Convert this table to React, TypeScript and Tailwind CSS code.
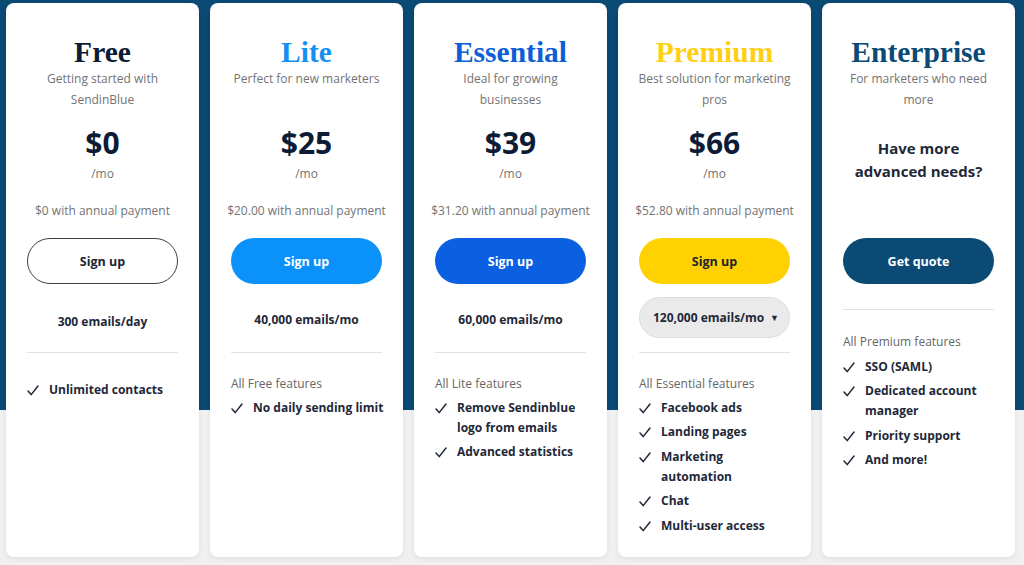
import React from 'react';

type Plan = {
  name: string;
  nameColor: string;
  subtitle: string[];
  price?: string;
  annual?: string;
  button: string;
  buttonClass: string;
  emails?: string;
  dropdown?: boolean;
  heading?: string;
  features: string[][];
};

const PLANS: Plan[] = [
  {
    name: 'Free',
    nameColor: 'text-[#0c1c36]',
    subtitle: ['Getting started with', 'SendinBlue'],
    price: '$0',
    annual: '$0 with annual payment',
    button: 'Sign up',
    buttonClass: 'bg-white border border-[#3a3f48] text-[#1c2433]',
    emails: '300 emails/day',
    features: [['Unlimited contacts']],
  },
  {
    name: 'Lite',
    nameColor: 'text-[#1590f2]',
    subtitle: ['Perfect for new marketers'],
    price: '$25',
    annual: '$20.00 with annual payment',
    button: 'Sign up',
    buttonClass: 'bg-[#0b92fa] text-white',
    emails: '40,000 emails/mo',
    heading: 'All Free features',
    features: [['No daily sending limit']],
  },
  {
    name: 'Essential',
    nameColor: 'text-[#0c5fd6]',
    subtitle: ['Ideal for growing', 'businesses'],
    price: '$39',
    annual: '$31.20 with annual payment',
    button: 'Sign up',
    buttonClass: 'bg-[#0a60e0] text-white',
    emails: '60,000 emails/mo',
    heading: 'All Lite features',
    features: [['Remove Sendinblue', 'logo from emails'], ['Advanced statistics']],
  },
  {
    name: 'Premium',
    nameColor: 'text-[#ffcf14]',
    subtitle: ['Best solution for marketing', 'pros'],
    price: '$66',
    annual: '$52.80 with annual payment',
    button: 'Sign up',
    buttonClass: 'bg-[#ffd100] text-[#1c2433]',
    emails: '120,000 emails/mo',
    dropdown: true,
    heading: 'All Essential features',
    features: [
      ['Facebook ads'],
      ['Landing pages'],
      ['Marketing', 'automation'],
      ['Chat'],
      ['Multi-user access'],
    ],
  },
];

const ENTERPRISE_FEATURES = [['SSO (SAML)'], ['Dedicated account', 'manager'], ['Priority support'], ['And more!']];

function Check() {
  return (
    <svg width="12" height="11" viewBox="0 0 12 11" className="shrink-0 mt-[5px]">
      <path d="M1 6 L4.2 9.6 L11 1" fill="none" stroke="#1e2838" strokeWidth="1.5" strokeLinecap="round" strokeLinejoin="round" />
    </svg>
  );
}

function FeatureList({ items }: { items: string[][] }) {
  return (
    <ul className="flex flex-col gap-[4.5px]">
      {items.map((lines) => (
        <li key={lines[0]} className="flex gap-[10px]">
          <Check />
          <span className="text-[12px] leading-[20px] font-bold text-[#1e2838] whitespace-nowrap">
            {lines.map((l, i) => (
              <span key={i} className="block">{l}</span>
            ))}
          </span>
        </li>
      ))}
    </ul>
  );
}

function Header({ name, nameColor, subtitle }: { name: string; nameColor: string; subtitle: string[] }) {
  return (
    <>
      <h2 className={`text-[29.5px] leading-[30px] font-bold text-center ${nameColor}`} style={{ fontFamily: '"Liberation Serif", serif' }}>
        {name}
      </h2>
      <div className="h-[42px] mt-[0.5px] flex flex-col items-center text-[12px] leading-[21px] text-[#737373]">
        {subtitle.map((s) => (
          <span key={s} className="whitespace-nowrap">{s}</span>
        ))}
      </div>
    </>
  );
}

function PlanCard({ plan }: { plan: Plan }) {
  return (
    <div className="w-[193px] h-[554px] shrink-0 bg-white rounded-[8px] shadow-[0_2px_6px_rgba(0,0,0,0.08)] px-[21px] pt-[34px] flex flex-col items-stretch">
      <Header name={plan.name} nameColor={plan.nameColor} subtitle={plan.subtitle} />
      <div className="mt-[15px] text-[30px] leading-[36px] font-bold text-[#0c1c36] text-center">{plan.price}</div>
      <div className="mt-[3px] text-[12px] leading-[20px] text-[#737373] text-center">/mo</div>
      <div className="mt-[17px] flex justify-center text-[12px] leading-[20px] text-[#737373]">
        <span className="whitespace-nowrap">{plan.annual}</span>
      </div>
      <button className={`mt-[17px] h-[46px] pt-[3px] rounded-full text-[12.5px] font-bold ${plan.buttonClass}`}>{plan.button}</button>
      <div className="h-[68px] flex items-center justify-center">
        {plan.dropdown ? (
          <div className="w-full h-[41px] rounded-full bg-[#ebeaea] border border-[#dedede] flex items-center justify-between pl-[13px] pr-[10px]">
            <span className="text-[12px] font-bold text-[#1e2838] whitespace-nowrap">{plan.emails}</span>
            <span className="text-[9px] text-[#1e2838]">▼</span>
          </div>
        ) : (
          <span className={`text-[12px] font-bold text-[#1e2838] whitespace-nowrap ${plan.name === 'Free' ? 'mt-[8px]' : 'mt-[4px]'}`}>{plan.emails}</span>
        )}
      </div>
      <div className="border-t border-[#e3e3e3]" />
      {plan.heading ? (
        <div className="mt-[21px]">
          <div className="text-[12px] leading-[20px] text-[#666] mb-[4px] whitespace-nowrap">{plan.heading}</div>
          <FeatureList items={plan.features} />
        </div>
      ) : (
        <div className="mt-[27px]">
          <FeatureList items={plan.features} />
        </div>
      )}
    </div>
  );
}

function EnterpriseCard() {
  return (
    <div className="w-[193px] h-[554px] shrink-0 bg-white rounded-[8px] shadow-[0_2px_6px_rgba(0,0,0,0.08)] px-[21px] pt-[34px] flex flex-col items-stretch">
      <Header name="Enterprise" nameColor="text-[#0b4a74]" subtitle={['For marketers who need', 'more']} />
      <p className="mt-[27px] text-[15px] leading-[23px] font-bold text-[#1e2838] text-center">
        Have more
        <br />
        advanced needs?
      </p>
      <button className="mt-[55px] h-[46px] pt-[3px] rounded-full bg-[#0b4a74] text-white text-[12.5px] font-bold">Get quote</button>
      <div className="mt-[25.5px] border-t border-[#e3e3e3]" />
      <div className="mt-[21.5px]">
        <div className="text-[12px] leading-[20px] text-[#666] mb-[5px] whitespace-nowrap">All Premium features</div>
        <FeatureList items={ENTERPRISE_FEATURES} />
      </div>
    </div>
  );
}

export default function App() {
  return (
    <div
      className="w-[1024px] h-[565px] overflow-hidden bg-[linear-gradient(to_bottom,#0b4a74_410px,#f1f1f1_410px)]"
      style={{ fontFamily: '"Open Sans", sans-serif' }}
    >
      <div className="flex gap-[11px] pl-[6px] pt-[3px]">
        {PLANS.map((p) => (
          <PlanCard key={p.name} plan={p} />
        ))}
        <EnterpriseCard />
      </div>
    </div>
  );
}
